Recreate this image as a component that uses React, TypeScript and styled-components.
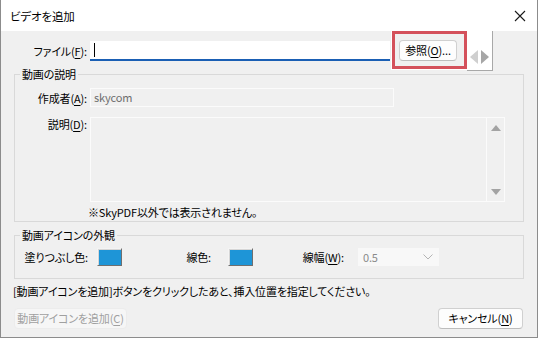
import React from 'react';
import styled, { createGlobalStyle } from 'styled-components';

const App = () => {
  return (
    <>
      <GlobalStyle />
      <Window>
        <TitleBar>
          <Title>ビデオを追加</Title>
          <CloseButton aria-label="閉じる">
            <svg width="12" height="12" viewBox="0 0 12 12">
              <path d="M1 1 L11 11 M11 1 L1 11" stroke="#1a1a1a" strokeWidth="1.1" fill="none" />
            </svg>
          </CloseButton>
        </TitleBar>

        <Body>
          <FileRow>
            <FieldLabel $width={73} $top={10}>
              ファイル(<u>F</u>):
            </FieldLabel>
            <FileInput>
              <Caret />
            </FileInput>
            <Highlight>
              <PushButton $width={58}>
                参照(<u>O</u>)...
              </PushButton>
            </Highlight>
            <Spin>
              <svg width="24" height="16" viewBox="0 0 24 16">
                <path d="M10 1 L2 8 L10 15 Z" fill="#cfcfcf" />
                <path d="M13 1 L21 8 L13 15 Z" fill="#a6a6a6" />
              </svg>
            </Spin>
          </FileRow>

          <Group>
            <Legend>動画の説明</Legend>
            <AuthorRow>
              <FieldLabel $width={72}>
                作成者(<u>A</u>):
              </FieldLabel>
              <ReadOnlyInput>skycom</ReadOnlyInput>
            </AuthorRow>
            <DescRow>
              <FieldLabel $width={72}>
                説明(<u>D</u>):
              </FieldLabel>
              <TextArea>
                <TextAreaBody />
                <ScrollBar>
                  <svg width="10" height="6" viewBox="0 0 10 6">
                    <path d="M0 6 L5 0 L10 6 Z" fill="#a3a3a3" />
                  </svg>
                  <svg width="10" height="6" viewBox="0 0 10 6">
                    <path d="M0 0 L10 0 L5 6 Z" fill="#a3a3a3" />
                  </svg>
                </ScrollBar>
              </TextArea>
            </DescRow>
            <Note>※SkyPDF以外では表示されません。</Note>
          </Group>

          <Group $gap={6}>
            <Legend>動画アイコンの外観</Legend>
            <AppearanceRow>
              <FieldLabel $width={73}>塗りつぶし色:</FieldLabel>
              <Swatch $color="#1e95d7" $left={9} />
              <FieldLabel $width={89}>線色:</FieldLabel>
              <Swatch $color="#1e95d7" $left={17} />
              <FieldLabel $width={91}>
                線幅(<u>W</u>):
              </FieldLabel>
              <Combo>
                <span>0.5</span>
                <svg width="10" height="6" viewBox="0 0 10 6">
                  <path d="M0.5 0.5 L5 5 L9.5 0.5" stroke="#b4b4b4" strokeWidth="1" fill="none" />
                </svg>
              </Combo>
            </AppearanceRow>
          </Group>

          <Hint>[動画アイコンを追加]ボタンをクリックしたあと、挿入位置を指定してください。</Hint>

          <ButtonRow>
            <PushButton $width={113} disabled>
              動画アイコンを追加(<u>C</u>)
            </PushButton>
            <PushButton $width={85}>
              キャンセル(<u>N</u>)
            </PushButton>
          </ButtonRow>
        </Body>
      </Window>
    </>
  );
};

const FONT = `'Noto Sans CJK JP', 'Noto Sans', sans-serif`;
const FACE = '#f0f0f0';

const GlobalStyle = createGlobalStyle`
  html, body {
    margin: 0;
    padding: 0;
    background: ${FACE};
  }
  body {
    font-family: ${FONT};
    font-size: 11px;
    letter-spacing: -0.15px;
    color: #000;
    font-feature-settings: 'palt';
  }
  u {
    text-underline-offset: 2px;
  }
`;

const Window = styled.div`
  width: 538px;
  height: 338px;
  box-sizing: border-box;
  border: 1px solid #8c8c8c;
  border-top: 0;
  background: ${FACE};
  display: flex;
  flex-direction: column;
`;

const TitleBar = styled.div`
  height: 31px;
  flex: none;
  background: #fff;
  display: flex;
  align-items: center;
  justify-content: space-between;
  padding-left: 9px;
`;

const Title = styled.span`
  font-size: 11.5px;
  line-height: 14px;
`;

const CloseButton = styled.button`
  width: 34px;
  height: 31px;
  padding: 0;
  border: 0;
  background: transparent;
  display: flex;
  align-items: center;
  justify-content: center;
`;

const Body = styled.div`
  display: flex;
  flex-direction: column;
  padding: 0 13px;
`;

const FieldLabel = styled.span<{ $width: number; $top?: number }>`
  flex: none;
  width: ${({ $width }) => $width}px;
  margin-top: ${({ $top }) => $top ?? 0}px;
  margin-right: 3px;
  text-align: right;
  white-space: nowrap;
  line-height: 20px;
`;

const FileRow = styled.div`
  display: flex;
  align-items: flex-start;
  height: 36px;
`;

const FileInput = styled.div`
  width: 296px;
  height: 18px;
  margin: 10px 2px 0 0;
  background: #fff;
  border-bottom: 2px solid #1a5fb4;
  display: flex;
  align-items: center;
  padding-left: 4px;
`;

const Caret = styled.span`
  width: 1px;
  height: 14px;
  background: #000;
`;

const Highlight = styled.div`
  width: 75px;
  height: 38px;
  box-sizing: border-box;
  border: 3px solid #d4515b;
  box-shadow: 0 0 0 1px #fff;
  display: flex;
  align-items: flex-start;
  padding: 6px 0 0 4px;
`;

const PushButton = styled.button<{ $width: number }>`
  flex: none;
  width: ${({ $width }) => $width}px;
  height: 21px;
  padding: 0;
  font-family: ${FONT};
  font-size: 11px;
  letter-spacing: -0.15px;
  font-feature-settings: 'palt';
  line-height: 19px;
  white-space: nowrap;
  color: #000;
  background: #fdfdfd;
  border: 1px solid #d0d0d0;
  border-bottom-color: #bdbdbd;
  border-radius: 4px;

  &:disabled {
    color: #a0a0a0;
    background: #f6f6f6;
    border-color: #ececec;
  }
`;

const Spin = styled.div`
  width: 26px;
  height: 40px;
  margin-bottom: -4px;
  box-sizing: border-box;
  background: #fff;
  border-right: 1px solid #a8a8a8;
  border-bottom: 1px solid #a8a8a8;
  display: flex;
  justify-content: center;
  align-items: flex-start;
  padding-top: 18px;
`;

const Group = styled.fieldset<{ $gap?: number }>`
  margin: ${({ $gap }) => $gap ?? 0}px 0 0;
  padding: 0 0 2px;
  min-inline-size: 0;
  border: 1px solid #d9d9d9;
`;

const Legend = styled.legend`
  margin-left: 5px;
  padding: 0 2px;
  line-height: 14px;
`;

const AuthorRow = styled.div`
  display: flex;
  align-items: center;
  margin-top: 7px;
  height: 19px;
`;

const ReadOnlyInput = styled.div`
  width: 304px;
  height: 19px;
  box-sizing: border-box;
  border: 1px solid #fbfbfb;
  padding-left: 3px;
  line-height: 17px;
  color: #6d6d6d;
`;

const DescRow = styled.div`
  display: flex;
  align-items: flex-start;
  margin-top: 10px;

  ${FieldLabel} {
    line-height: 14px;
  }
`;

const TextArea = styled.div`
  width: 415px;
  height: 85px;
  box-sizing: border-box;
  border: 1px solid #fbfbfb;
  display: flex;
`;

const TextAreaBody = styled.div`
  flex: 1;
`;

const ScrollBar = styled.div`
  width: 17px;
  border-left: 1px solid #fbfbfb;
  display: flex;
  flex-direction: column;
  justify-content: space-between;
  align-items: center;
  padding: 7px 0 6px;
`;

const Note = styled.div`
  margin: 3px 0 0 73px;
  line-height: 14px;
`;

const AppearanceRow = styled.div`
  display: flex;
  align-items: center;
  height: 20px;
  margin: 5px 0 9px;
`;

const Swatch = styled.div<{ $color: string; $left: number }>`
  flex: none;
  width: 25px;
  height: 18px;
  margin-left: ${({ $left }) => $left - 3}px;
  box-sizing: border-box;
  background: ${({ $color }) => $color};
  border: 1px solid;
  border-color: #f4f4f4 #6f6f6f #6f6f6f #f4f4f4;
  box-shadow: inset 1px 1px 0 #d6d6d6;
`;

const Combo = styled.div`
  margin-left: 11px;
  width: 81px;
  height: 18px;
  box-sizing: border-box;
  background: #f8f8f8;
  display: flex;
  align-items: center;
  justify-content: space-between;
  padding: 0 6px 0 5px;
  color: #8a8a8a;
`;

const Hint = styled.div`
  margin: 5px 0 0 -1px;
  line-height: 14px;
  white-space: nowrap;
`;

const ButtonRow = styled.div`
  display: flex;
  justify-content: space-between;
  margin-top: 10px;
  padding-right: 1px;
`;

export default App;
